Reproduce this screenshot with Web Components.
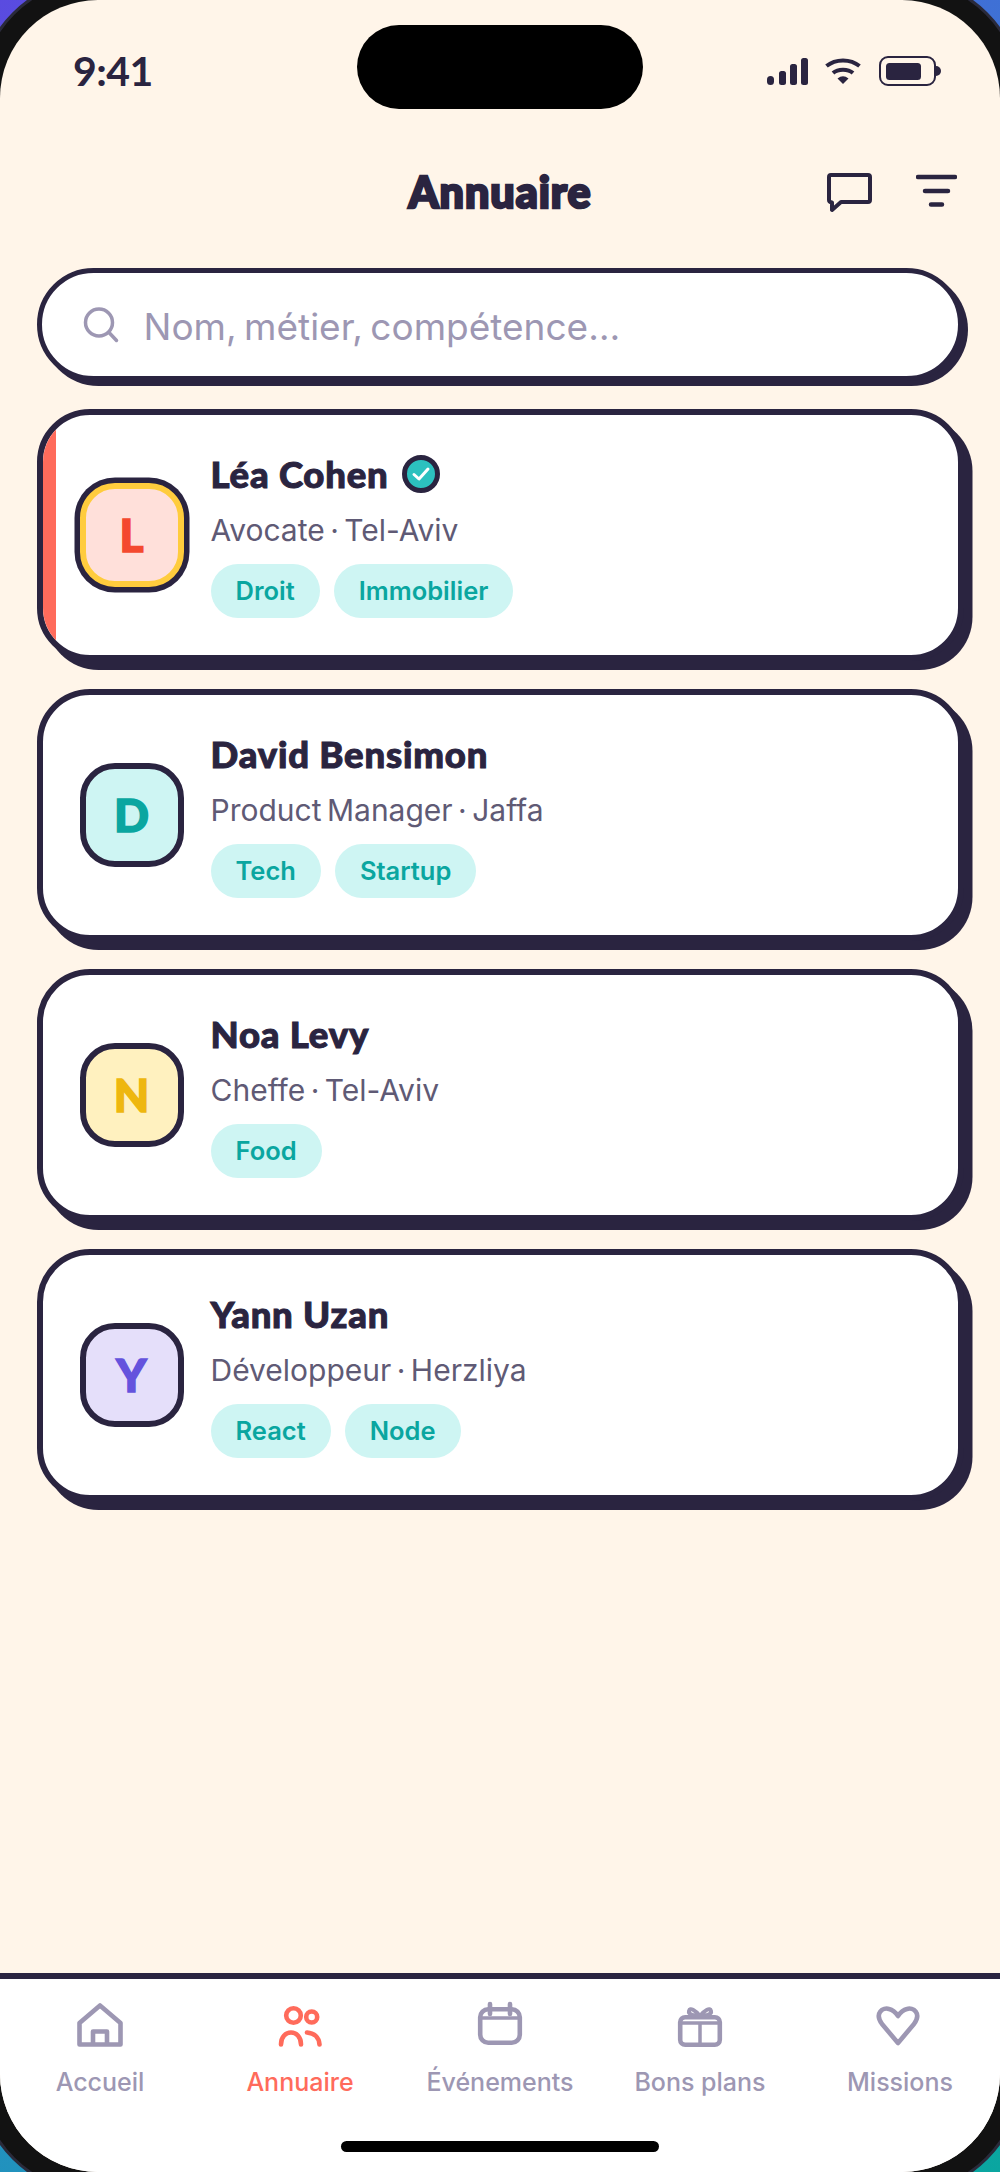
<!DOCTYPE html>
<html lang="fr"><head><meta charset="utf-8"><title>Annuaire</title>
<style>
html,body{margin:0;padding:0;width:1000px;height:2172px;overflow:hidden}
body{background:linear-gradient(135deg,#5a4be0 0%,#2f86cf 50%,#0aa6a0 100%);font-family:"Inter","Liberation Sans",sans-serif}
</style></head><body>
<template id="ph-screen-t"><style>
:host{display:block;width:1000px;height:2172px;position:relative}
.bezel{position:absolute;inset:-23px;box-sizing:border-box;border-radius:121px;background:#121212;border:3px solid #2a2a3a;z-index:0}
.scr{position:relative;z-index:1;display:flex;flex-direction:column;width:1000px;height:2172px;background:#fff5e9;border-radius:98px;overflow:hidden}
.isl{position:absolute;left:357px;top:25px;width:286px;height:84px;border-radius:42px;background:#000;z-index:3}
.main{flex:1;display:flex;flex-direction:column;padding:0 36.5px;min-height:0}
.list{display:flex;flex-direction:column;gap:28px;margin-top:28px}
</style><div class="bezel"></div><div class="scr"><div class="isl"></div><slot name="status"></slot><slot name="head"></slot>
<div class="main"><slot name="search"></slot><div class="list"><slot></slot></div></div><slot name="tabs"></slot></div></template>

<template id="st-bar-t"><style>
:host{display:flex;justify-content:space-between;align-items:center;height:75px;padding:33px 59px 0 73px;color:#2a2440}
.t{font:700 41px/1 "Lato",sans-serif;letter-spacing:-.5px}
.i{display:flex;align-items:center;gap:17px}
svg{display:block}
</style><span class="t">9:41</span><div class="i">
<svg width="41" height="30" viewBox="0 0 41 30" fill="#2a2440"><rect x="0" y="20" width="7" height="9" rx="3.5"/><rect x="12" y="15" width="7" height="14" rx="2.5"/><rect x="23" y="8" width="7" height="21" rx="2.5"/><rect x="34" y="2" width="7" height="27" rx="2.5"/></svg>
<svg width="36" height="30" viewBox="0 0 36 30"><path d="M1.500 10C10.500 2.500 25.500 2.500 34.500 10M8 17C13 12.500 23 12.500 28 17" fill="none" stroke="#2a2440" stroke-width="4"/><path d="M12.500 22.500Q18 18 23.500 22.500L18 28Z" fill="#2a2440"/></svg>
<svg width="62" height="30" viewBox="0 0 62 30" style="margin-left:1px"><rect x="1" y="1" width="55" height="28" rx="8" fill="none" stroke="#2a2440" stroke-width="2"/><rect x="7" y="7" width="35" height="17" rx="3.500" fill="#2a2440"/><path d="M57 10a5 5 0 0 1 0 10z" fill="#2a2440"/></svg>
</div></template>

<template id="app-head-t"><style>
:host{display:block;position:relative;height:160px}
h1{margin:0;padding-top:59px;text-align:center;font:900 43px/1.15 "Lato",sans-serif;color:#2a2440;-webkit-text-stroke:2.500px #2a2440;letter-spacing:1px}
.a{position:absolute;right:43px;top:65px;display:flex;gap:43px;align-items:flex-start}
svg{display:block}
</style><h1>Annuaire</h1><div class="a">
<svg width="46" height="40" viewBox="0 0 46 40"><path d="M4 2H41a2 2 0 0 1 2 2V27a2 2 0 0 1-2 2H14L5 37V29.500Q2 29 2 27V4a2 2 0 0 1 2-2Z" fill="none" stroke="#2a2440" stroke-width="4" stroke-linejoin="round"/></svg>
<svg width="41" height="36" viewBox="0 0 41 36"><path d="M2 4H39M9 18H32M15 31.500H26" fill="none" stroke="#2a2440" stroke-width="4.500" stroke-linecap="round"/></svg>
</div></template>

<template id="search-box-t"><style>
:host{display:flex;align-items:center;gap:25px;box-sizing:border-box;height:113px;width:926px;padding:0 0 0 41px;background:#fff;border:5.500px solid #2a2440;border-radius:57px;box-shadow:5px 5px 0 #2a2440;font:400 37px/1 "Inter",sans-serif;word-spacing:-3px;color:#9d97b3}
svg{display:block;flex:none}
span{position:relative;top:2px}
</style><svg width="36" height="36" viewBox="0 0 36 36"><circle cx="16" cy="15.500" r="13.500" fill="none" stroke="#9d97b3" stroke-width="3.500"/><path d="M26 25.500L33.500 33.500" stroke="#9d97b3" stroke-width="3.500" stroke-linecap="round"/></svg><span><slot></slot></span></template>

<template id="person-card-t"><style>
:host{display:block;box-sizing:border-box;height:252px;width:927px;background:#fff;border:6.800px solid #2a2440;border-radius:53px;box-shadow:8.500px 9px 0 #2a2440;overflow:hidden;position:relative}
.w{display:flex;align-items:center;gap:27px;height:100%;padding-left:37px;box-sizing:border-box}
:host([flag]) .s{display:block}
.s{display:none;position:absolute;left:0;top:0;bottom:0;width:13.500px;background:#ff6b5b}
.av{flex:none;width:104px;height:104px;box-sizing:border-box;border:6px solid #2a2440;border-radius:35px;display:flex;align-items:center;justify-content:center;font:900 46px/1 "Lato",sans-serif;-webkit-text-stroke:1.500px var(--fg);background:var(--bg);color:var(--fg)}
:host([flag]) .av{border-color:#ffcc3d;box-shadow:0 0 0 5.500px #2a2440}
.b{display:flex;flex-direction:column;align-items:flex-start}
.n{display:flex;align-items:center;gap:13px;font:900 36.500px/44px "Lato",sans-serif;letter-spacing:.8px;color:#2a2440;height:44px;-webkit-text-stroke:1px #2a2440}
.r{font:400 30px/36px "Inter",sans-serif;word-spacing:-3px;color:#5f5a75;margin-top:16px;height:36px}
.tags{display:flex;gap:14px;margin-top:16px}
.ck{display:none}
:host([verified]) .ck{display:block}
svg{display:block}
</style><div class="s"></div><div class="w"><div class="av"><slot name="ini"></slot></div><div class="b"><div class="n"><slot name="name"></slot><svg class="ck" width="38" height="38" viewBox="0 0 38 38"><circle cx="19" cy="19" r="16.500" fill="#2cc1bf" stroke="#2a2440" stroke-width="5"/><path d="M12 19.500L17 24L26 14" fill="none" stroke="#fff" stroke-width="3" stroke-linecap="round" stroke-linejoin="round"/></svg></div><div class="r"><slot name="role"></slot></div><div class="tags"><slot></slot></div></div></div></template>

<template id="tag-pill-t"><style>
:host{display:inline-flex;align-items:center;box-sizing:border-box;height:54px;padding:0 25px;border-radius:27px;background:#cef5f3;color:#0aa6a0;font:600 25.500px/1 "Inter",sans-serif}
</style><slot></slot></template>

<template id="tab-bar-t"><style>
:host{display:block;height:193px;margin-top:auto;background:#fff;border-top:6px solid #2a2440;position:relative;box-sizing:content-box}
.r{display:grid;grid-template-columns:repeat(5,200px)}
.h{position:absolute;left:341px;top:162px;width:318px;height:11px;border-radius:6px;background:#000}
</style><div class="r"><slot></slot></div><div class="h"></div></template>

<template id="tab-item-t"><style>
:host{display:flex;flex-direction:column;align-items:center;padding-top:21px;color:#9d97b3;font:500 25px/1 "Inter",sans-serif}
:host([on]){color:#ff6b5b}
::slotted(svg){display:block;width:62px;height:62px}
.l{margin-top:8px}
</style><slot name="ic"></slot><span class="l"><slot></slot></span></template>

<ph-screen>
<st-bar slot="status"></st-bar>
<app-head slot="head"></app-head>
<search-box slot="search">Nom, métier, compétence…</search-box>

<person-card flag verified style="--bg:#ffe0da;--fg:#f4492f"><span slot="ini">L</span><span slot="name">Léa Cohen</span><span slot="role">Avocate · Tel-Aviv</span><tag-pill>Droit</tag-pill><tag-pill>Immobilier</tag-pill></person-card>
<person-card style="--bg:#cef5f3;--fg:#0aa6a0"><span slot="ini">D</span><span slot="name">David Bensimon</span><span slot="role">Product Manager · Jaffa</span><tag-pill>Tech</tag-pill><tag-pill>Startup</tag-pill></person-card>
<person-card style="--bg:#fff1bf;--fg:#eeb70f"><span slot="ini">N</span><span slot="name">Noa Levy</span><span slot="role">Cheffe · Tel-Aviv</span><tag-pill>Food</tag-pill></person-card>
<person-card style="--bg:#e5dffa;--fg:#6453dd"><span slot="ini">Y</span><span slot="name">Yann Uzan</span><span slot="role">Développeur · Herzliya</span><tag-pill>React</tag-pill><tag-pill>Node</tag-pill></person-card>

<tab-bar slot="tabs">
<tab-item><svg slot="ic" viewBox="0 0 62 62" fill="none" stroke="#9d97b3" stroke-width="4.600" stroke-linejoin="round"><path d="M10.500 23L31 5.500L51.500 23V44.500H10.500Z"/><path d="M24 44.500V31.500H38V44.500"/></svg>Accueil</tab-item>
<tab-item on><svg slot="ic" viewBox="0 0 62 62" fill="none" stroke="#ff6b5b" stroke-width="4.600" stroke-linecap="round"><circle cx="24.500" cy="15.500" r="7.300"/><circle cx="42.700" cy="17" r="5.500"/><path d="M12 44.500C12 28.500 32 28.500 32 44.500M38 32.500C45 33 50 37 50.500 44.500"/></svg>Annuaire</tab-item>
<tab-item><svg slot="ic" viewBox="0 0 62 62" fill="none" stroke="#9d97b3" stroke-width="4.600" stroke-linecap="round"><rect x="11.200" y="9.200" width="39.600" height="33.600" rx="8"/><path d="M21 4V14M41 4V14"/><path d="M11.200 18H50.800" stroke-width="3.500"/></svg>Événements</tab-item>
<tab-item><svg slot="ic" viewBox="0 0 62 62" fill="none" stroke="#9d97b3" stroke-width="4.600" stroke-linejoin="round" stroke-linecap="round"><rect x="11.200" y="17.200" width="39.600" height="27.600" rx="5"/><path d="M11.200 23H50.800M31 23V44.800" stroke-width="3.500"/><path d="M31 16C26 10 21 7 20 11C19 15 26 16 31 16C36 16 43 15 42 11C41 7 36 10 31 16Z" stroke-width="4"/></svg>Bons plans</tab-item>
<tab-item><svg slot="ic" viewBox="0 0 62 62" fill="none" stroke="#9d97b3" stroke-width="4.600" stroke-linejoin="round" stroke-linecap="round"><path d="M29 43L13 24C5 13 14 7 20 9C24 10 27 13 29 16C31 13 34 10 38 9C44 7 53 13 45 24Z"/></svg>Missions</tab-item>
</tab-bar>
</ph-screen>
<script>
for(const [tag,tid] of [['ph-screen','ph-screen-t'],['st-bar','st-bar-t'],['app-head','app-head-t'],['search-box','search-box-t'],['person-card','person-card-t'],['tag-pill','tag-pill-t'],['tab-bar','tab-bar-t'],['tab-item','tab-item-t']]){
  customElements.define(tag,class extends HTMLElement{constructor(){super();this.attachShadow({mode:'open'}).appendChild(document.getElementById(tid).content.cloneNode(true));}});
}
</script>
</body></html>
